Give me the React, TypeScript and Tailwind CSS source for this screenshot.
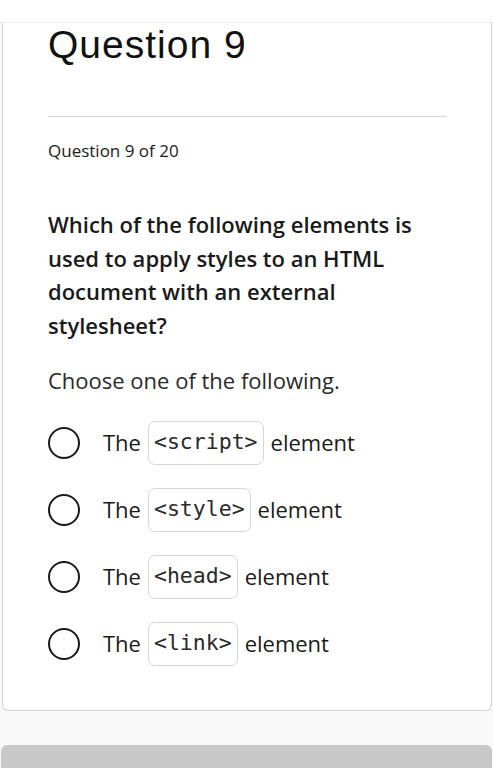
import React from "react";

const options = ["<script>", "<style>", "<head>", "<link>"];

export default function App() {
  return (
    <div className="min-h-[768px] bg-[#f9f9f9] overflow-hidden" style={{ fontFamily: '"Open Sans", sans-serif' }}>
      <div className="h-[22px] bg-white" />
      <div className="ml-[2px] mr-[1px] bg-white border border-[#d4d4d4] border-t-[#ededed] rounded-b-[6px] pl-[45px] pr-[45px] pb-[45px]">
        <h1
          className="text-[39px] leading-[44px] text-[#111] tracking-[1px]"
          style={{ fontFamily: '"Liberation Sans", Arial, sans-serif' }}
        >
          Question 9
        </h1>
        <div className="mt-[49px] h-px bg-[#d2d2d2]" />
        <p className="mt-[23px] text-[17px] leading-[22px] text-[#1a1a1a]">Question 9 of 20</p>
        <p className="mt-[46px] text-[22px] leading-[33.5px] font-semibold text-[#1a1a1a]">
          Which of the following elements is used to apply styles to an HTML document with an external stylesheet?
        </p>
        <p className="mt-[23px] text-[22px] leading-[30px] text-[#2a2a2a]">Choose one of the following.</p>
        <div className="mt-[26px] flex flex-col gap-[24px]">
          {options.map((o) => (
            <div key={o} className="flex items-center h-[43px]">
              <span className="w-[32px] h-[32px] rounded-full border-[2.5px] border-[#1a1a1a] shrink-0" />
              <span className="ml-[23px] text-[22px] text-[#1a1a1a] flex items-center">
                The
                <span
                  className="mx-[7px] h-[44px] px-[5px] flex items-center border border-[#d6d6d6] rounded-[7px] text-[21.5px] text-[#2a2a2a]"
                  style={{ fontFamily: '"DejaVu Sans Mono", monospace' }}
                >
                  {o}
                </span>
                element
              </span>
            </div>
          ))}
        </div>
      </div>
      <div className="mt-[34px] ml-[1px] mr-[1px] h-[30px] rounded-t-[6px] bg-[#c8c8c8]" />
    </div>
  );
}
